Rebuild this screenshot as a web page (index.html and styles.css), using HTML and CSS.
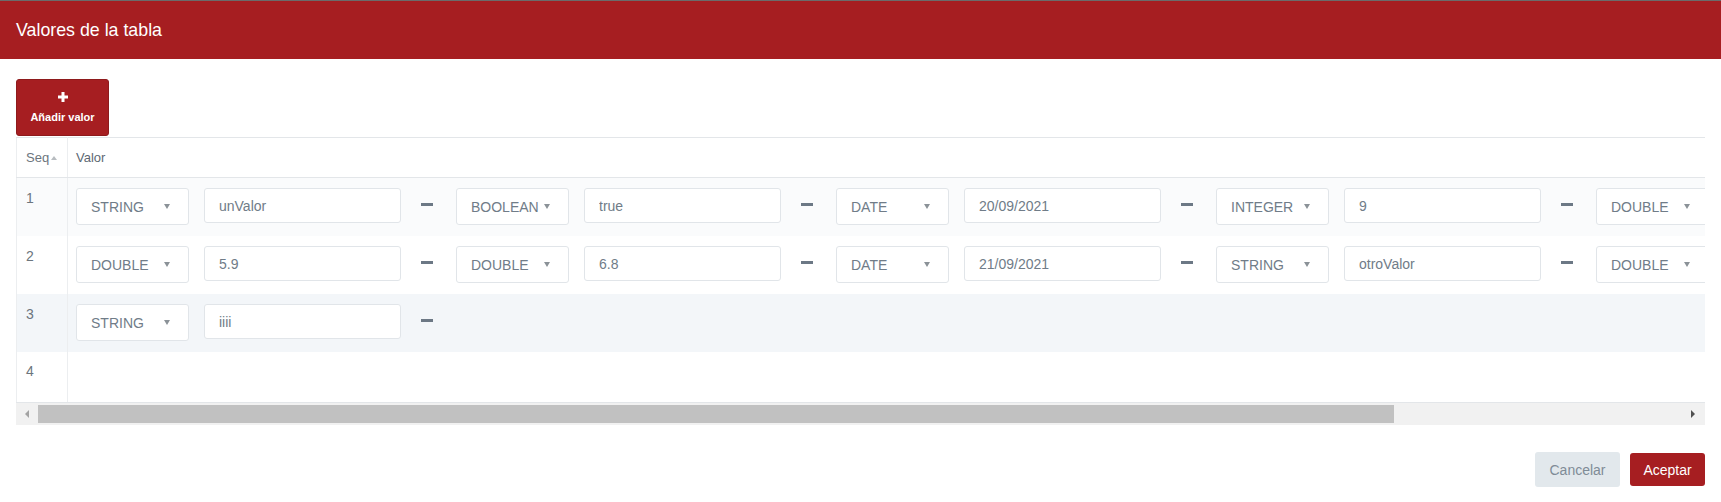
FILE: index.html
```html
<!DOCTYPE html>
<html>
    <head>
        <title>Valores de la tabla</title>
        <link rel="stylesheet" href="styles.css">
    </head>
    <body>
        <div class="topline"></div>
        <header class="modal-header">
            <h1>Valores de la tabla</h1>
        </header>
        <section class="modal-body">
            <button class="add">
                <svg width="10" height="10" viewBox="0 0 10 10"><rect x="3.5" y="0" width="3" height="10" fill="#fff"/><rect x="0" y="3.5" width="10" height="3" fill="#fff"/></svg>
                <span>Añadir valor</span>
            </button>
            <div class="grid">
                <table>
                    <colgroup><col class="col-seq"><col></colgroup>
                    <thead>
                        <tr><th class="seq">Seq<span class="sort"></span></th><th>Valor</th></tr>
                    </thead>
                    <tbody>
                        <tr class="odd">
                            <td class="seq">1</td>
                            <td><div class="values">
                                <div class="pair"><div class="select"><span>STRING</span><i></i></div><input type="text" value="unValor"><span class="minus"></span></div>
                                <div class="pair"><div class="select"><span>BOOLEAN</span><i></i></div><input type="text" value="true"><span class="minus"></span></div>
                                <div class="pair"><div class="select"><span>DATE</span><i></i></div><input type="text" value="20/09/2021"><span class="minus"></span></div>
                                <div class="pair"><div class="select"><span>INTEGER</span><i></i></div><input type="text" value="9"><span class="minus"></span></div>
                                <div class="pair"><div class="select"><span>DOUBLE</span><i></i></div><input type="text" value="1.5"><span class="minus"></span></div>
                            </div></td>
                        </tr>
                        <tr>
                            <td class="seq">2</td>
                            <td><div class="values">
                                <div class="pair"><div class="select"><span>DOUBLE</span><i></i></div><input type="text" value="5.9"><span class="minus"></span></div>
                                <div class="pair"><div class="select"><span>DOUBLE</span><i></i></div><input type="text" value="6.8"><span class="minus"></span></div>
                                <div class="pair"><div class="select"><span>DATE</span><i></i></div><input type="text" value="21/09/2021"><span class="minus"></span></div>
                                <div class="pair"><div class="select"><span>STRING</span><i></i></div><input type="text" value="otroValor"><span class="minus"></span></div>
                                <div class="pair"><div class="select"><span>DOUBLE</span><i></i></div><input type="text" value="2.5"><span class="minus"></span></div>
                            </div></td>
                        </tr>
                        <tr class="hover">
                            <td class="seq">3</td>
                            <td><div class="values">
                                <div class="pair"><div class="select"><span>STRING</span><i></i></div><input type="text" value="iiii"><span class="minus"></span></div>
                            </div></td>
                        </tr>
                        <tr class="empty">
                            <td class="seq">4</td>
                            <td></td>
                        </tr>
                    </tbody>
                </table>
                <div class="scrollbar">
                    <span class="arrow left"></span>
                    <span class="thumb"></span>
                    <span class="arrow right"></span>
                </div>
            </div>
        </section>
        <footer class="modal-footer">
            <button class="cancel">Cancelar</button>
            <button class="accept">Aceptar</button>
        </footer>
    </body>
</html>
```

FILE: styles.css
```css
html {
    background: #fff;
    font-family: "Liberation Sans", Arial, sans-serif;
}

body {
    margin: 0;
    width: 1721px;
    overflow: hidden;
}

.topline {
    height: 1px;
    background: #6b6b6b;
}

.modal-header {
    display: flex;
    align-items: center;
    height: 58px;
    padding: 0 16px;
    background: #a61e21;
}

    .modal-header h1 {
        margin: 0;
        color: #fff;
        font-size: 17.8px;
        font-weight: normal;
    }

.modal-body {
    padding: 20px 16px 0;
}

button {
    font-family: inherit;
    cursor: pointer;
}

button.add {
    display: flex;
    flex-direction: column;
    align-items: center;
    width: 93px;
    height: 57px;
    margin: 0 0 1px;
    padding: 12px 0 0;
    border: 1px solid #8e1a1c;
    border-radius: 3px;
    background: #a61e21;
    color: #fff;
    font-size: 11px;
    font-weight: bold;
}

    button.add span {
        margin-top: 8px;
        line-height: 14px;
    }

.grid {
    width: 1689px;
}

table {
    width: 100%;
    table-layout: fixed;
    border-collapse: collapse;
    border-left: 1px solid #eceef0;
}

    col.col-seq {
        width: 51px;
    }

    th {
        height: 39px;
        padding: 0 8px;
        border-top: 1px solid #e3e6e9;
        border-bottom: 1px solid #e3e6e9;
        text-align: left;
        font-size: 13px;
        font-weight: normal;
        color: #5d6873;
    }

    th.seq {
        padding-left: 9px;
        color: #6c757d;
    }

    .sort {
        display: inline-block;
        margin-left: 2px;
        vertical-align: 2px;
        border-left: 3px solid transparent;
        border-right: 3px solid transparent;
        border-bottom: 4px solid #b8bcc0;
    }

    .seq {
        border-right: 1px solid #eceef0;
    }

    td {
        height: 37px;
        padding: 10px 0 11px 8px;
        vertical-align: top;
    }

    td.seq {
        padding-left: 9px;
        line-height: 20px;
        font-size: 14px;
        color: #6c757d;
    }

    tr.odd td {
        background: #fafbfc;
    }

    tr.hover td {
        background: #f3f6f9;
    }

    tr.empty td {
        height: 30px;
        padding-top: 9px;
    }

    tbody tr:last-child td {
        border-bottom: 1px solid #e3e6e9;
    }

.values {
    display: flex;
    overflow: hidden;
    white-space: nowrap;
}

.pair {
    display: flex;
    flex: none;
    align-items: flex-start;
    width: 380px;
}

.select {
    display: flex;
    flex: none;
    align-items: center;
    justify-content: space-between;
    box-sizing: border-box;
    width: 113px;
    height: 37px;
    padding: 0 18px 0 14px;
    border: 1px solid #e1e5e9;
    border-radius: 3px;
    background: #fff;
    font-size: 14px;
    color: #707c88;
}

    .select i {
        border-left: 3.5px solid transparent;
        border-right: 3.5px solid transparent;
        border-top: 5px solid #8b9298;
    }

input {
    flex: none;
    box-sizing: border-box;
    width: 197px;
    height: 35px;
    margin: 0 0 0 15px;
    padding: 0 14px;
    border: 1px solid #e1e5e9;
    border-radius: 3px;
    background: #fff;
    font-family: inherit;
    font-size: 14px;
    color: #707c88;
    outline: none;
}

.minus {
    flex: none;
    width: 12px;
    height: 3px;
    margin: 15px 0 0 20px;
    background: #6c7885;
}

.scrollbar {
    display: flex;
    align-items: center;
    height: 22px;
    background: #f1f1f1;
}

    .scrollbar .thumb {
        width: 1356px;
        height: 18px;
        margin-left: 2px;
        background: #c1c1c1;
    }

    .scrollbar .arrow {
        display: flex;
        justify-content: center;
        width: 20px;
    }

    .arrow.left {
        width: 20px;
        padding-left: 2px;
        box-sizing: border-box;
    }

    .arrow.left::before {
        content: "";
        border-top: 4px solid transparent;
        border-bottom: 4px solid transparent;
        border-right: 4px solid #a3a3a3;
    }

    .arrow.right {
        margin-left: auto;
        width: 24px;
    }

    .arrow.right::before {
        content: "";
        border-top: 4px solid transparent;
        border-bottom: 4px solid transparent;
        border-left: 4px solid #505050;
    }

.modal-footer {
    display: flex;
    align-items: center;
    justify-content: flex-end;
    gap: 10px;
    padding: 27px 16px 0;
}

    .modal-footer button {
        border: none;
        border-radius: 3px;
        font-size: 14px;
    }

    button.cancel {
        width: 85px;
        height: 35px;
        background: #e2e8ec;
        color: #7f8c97;
    }

    button.accept {
        width: 75px;
        height: 33px;
        background: #a61e21;
        color: #fff;
    }
```
